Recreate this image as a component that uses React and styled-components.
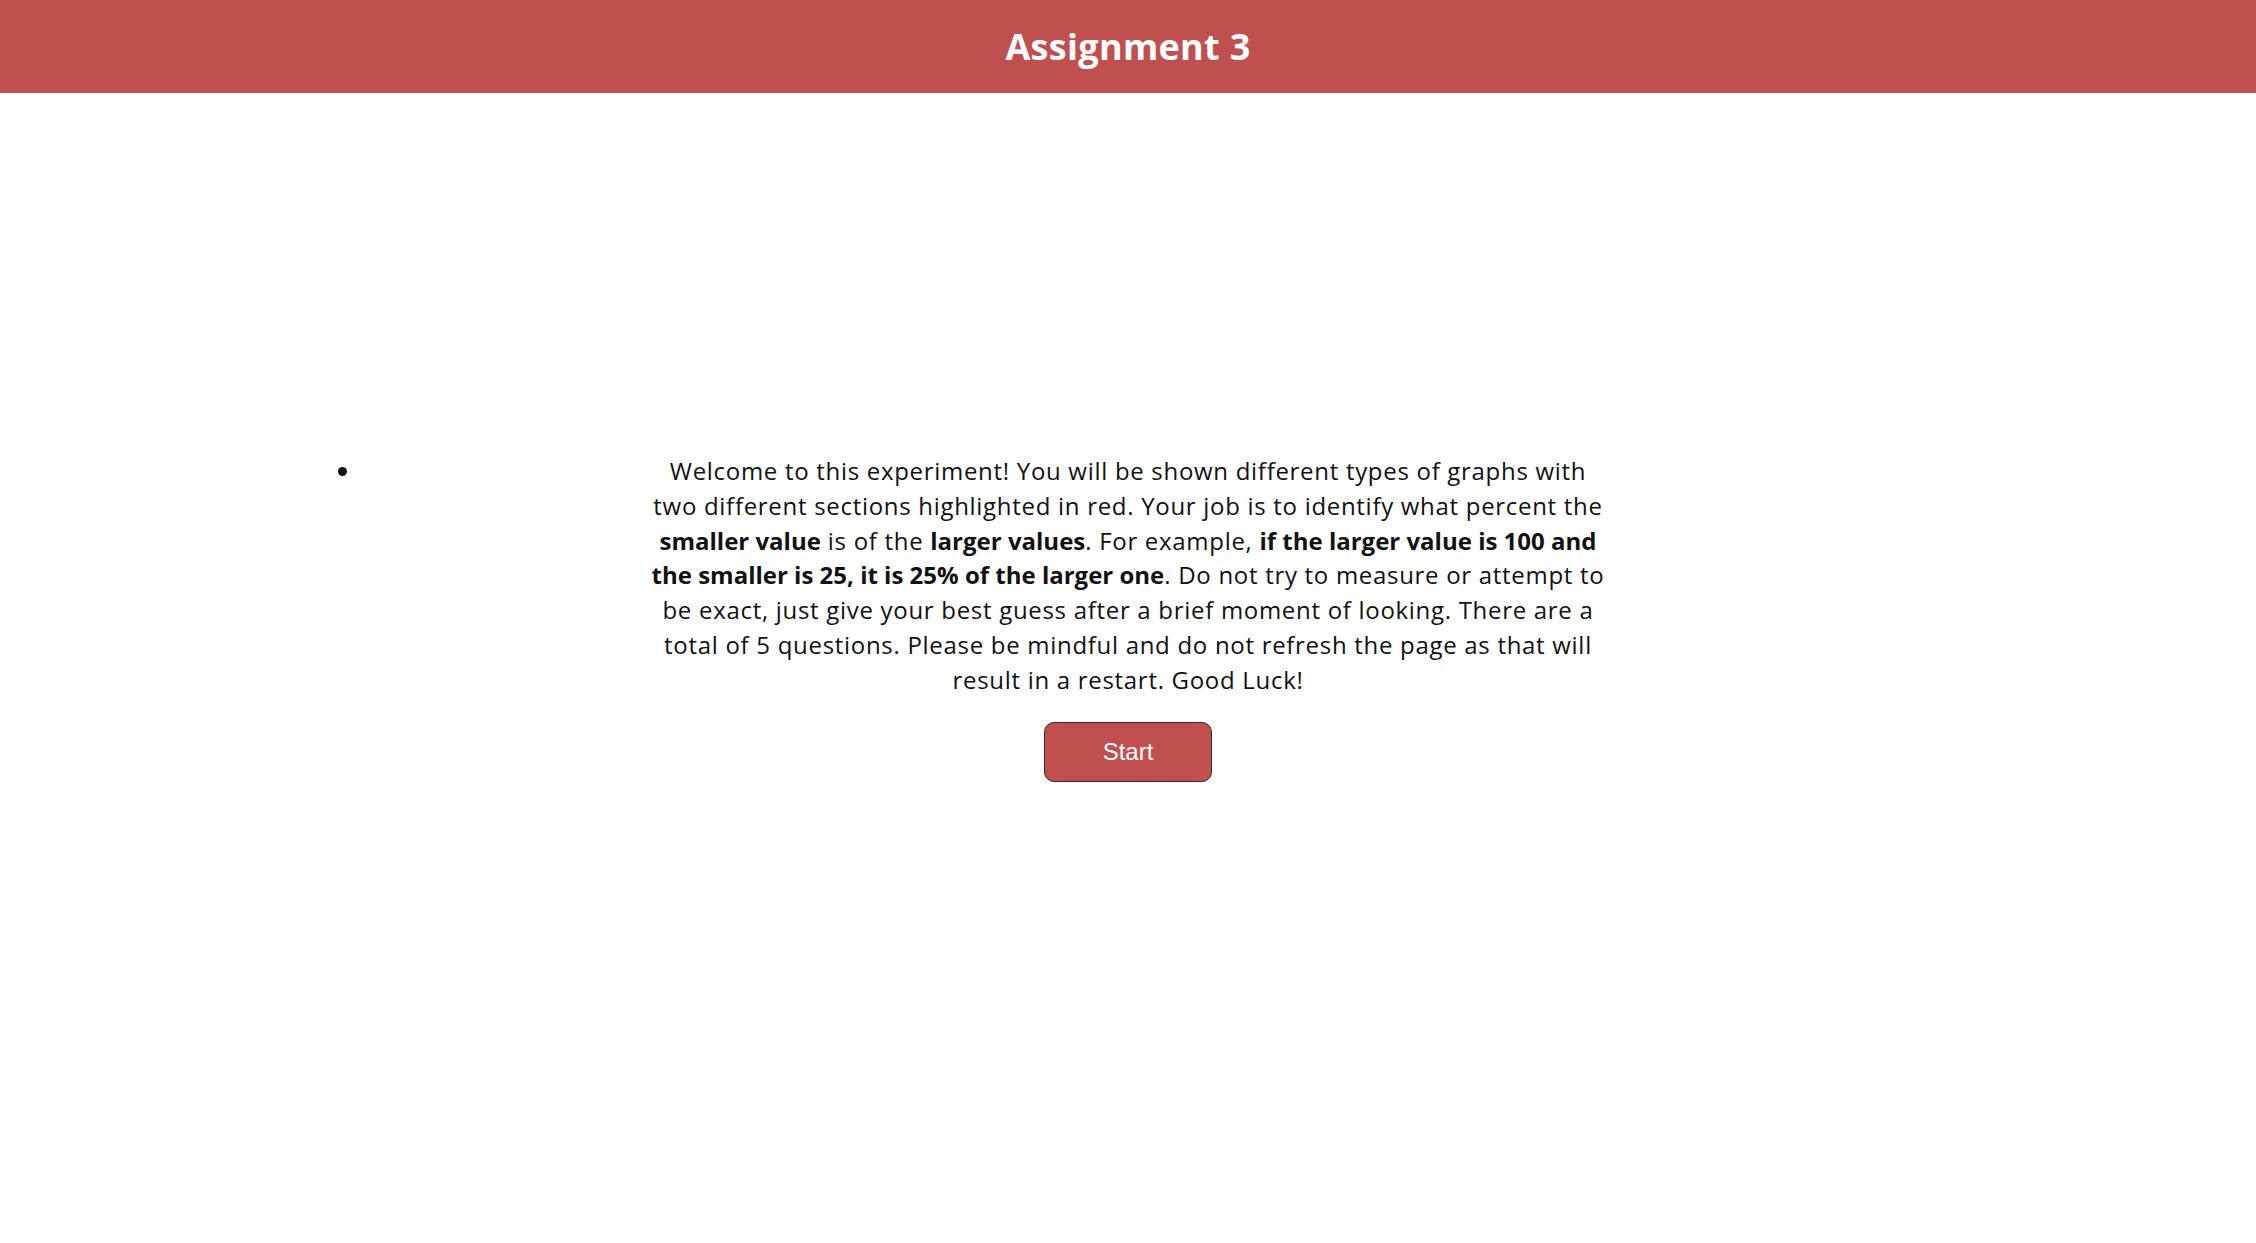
import styled, { createGlobalStyle } from "styled-components";

const GlobalStyle = createGlobalStyle`
  html, body {
    margin: 0;
    padding: 0;
    background: #fff;
  }
  body {
    font-family: "Open Sans", "DejaVu Sans", sans-serif;
    color: #111;
  }
`;

function App() {
  return (
    <Page>
      <GlobalStyle />
      <Header>
        <Title>Assignment 3</Title>
      </Header>
      <Main>
        <List>
          <Intro>
            <Text>
              Welcome to this experiment! You will be shown different types of graphs with
              two different sections highlighted in red. Your job is to identify what percent the{" "}
              <b>smaller value</b> is of the <b>larger values</b>. For example,{" "}
              <b>if the larger value is 100 and the smaller is 25, it is 25% of the larger one</b>.
              Do not try to measure or attempt to be exact, just give your best guess after a brief
              moment of looking. There are a total of 5 questions. Please be mindful and do not
              refresh the page as that will result in a restart. Good Luck!
            </Text>
            <StartButton>Start</StartButton>
          </Intro>
        </List>
      </Main>
    </Page>
  );
}

const Page = styled.div`
  min-height: 100vh;
  display: flex;
  flex-direction: column;
`;

const Header = styled.header`
  height: 93px;
  background-color: #c05050;
  display: flex;
  justify-content: center;
  align-items: center;
`;

const Title = styled.h1`
  margin: 0;
  color: #fff;
  font-size: 36px;
  font-weight: 700;
  letter-spacing: 0.3px;
`;

const Main = styled.main`
  padding-top: 360px;
`;

const List = styled.ul`
  margin: 0;
  padding: 0 363px;
  list-style: disc outside;
`;

const Intro = styled.li`
  display: list-item;
  text-align: center;
  font-size: 24px;
  line-height: 34.8px;
  &::marker {
    font-size: 26px;
  }
`;

const Text = styled.p`
  margin: 0 auto;
  max-width: 962px;
  letter-spacing: 0.7px;
  b {
    font-weight: 700;
    letter-spacing: 0;
  }
`;

const StartButton = styled.button`
  display: block;
  margin: 24px auto 0;
  width: 168px;
  height: 60px;
  background-color: #c05050;
  color: #fff;
  border: 1px solid #3a2a2a;
  border-radius: 10px;
  font-family: "Liberation Sans", Arial, sans-serif;
  font-size: 24px;
  cursor: pointer;
`;

export default App;
